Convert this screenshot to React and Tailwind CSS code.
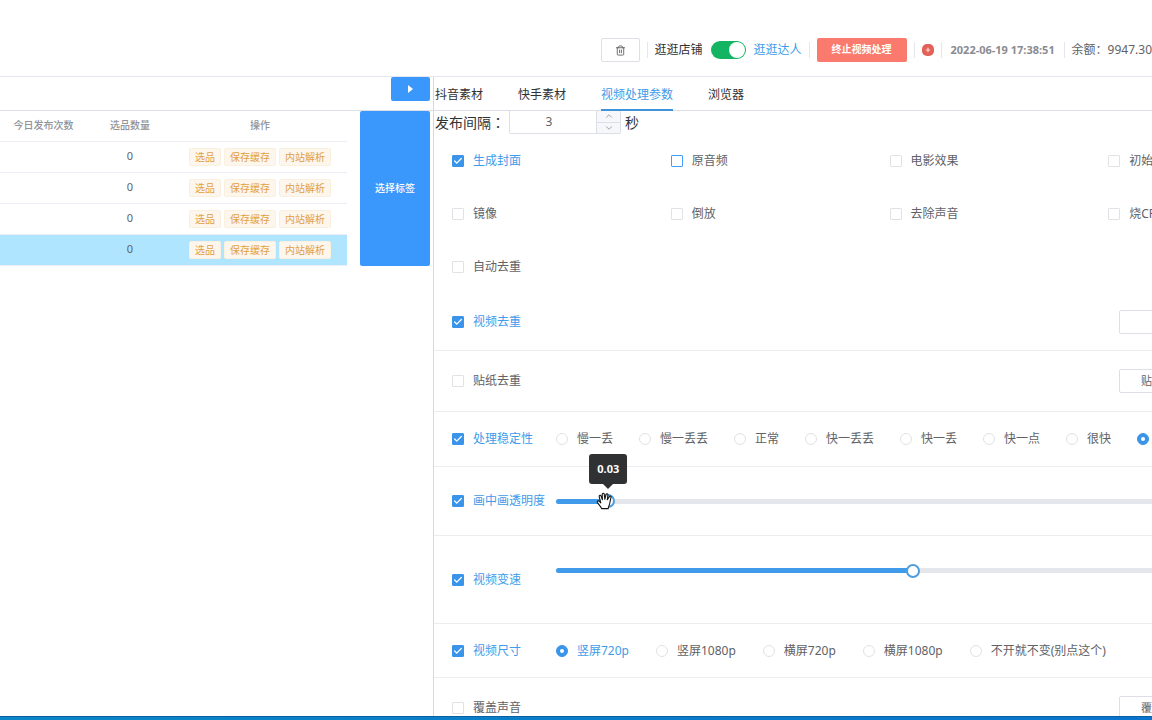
import React, { useState } from "react";
import { Trash2, ChevronUp, ChevronDown, Check } from "lucide-react";

const TABS = ["抖音素材", "快手素材", "视频处理参数", "浏览器"];

const EFFECTS = [
  "生成封面", "原音频", "电影效果", "初始化",
  "镜像", "倒放", "去除声音", "烧CPU",
  "自动去重",
];

const STABILITY = ["慢一丢", "慢一丢丢", "正常", "快一丢丢", "快一丢", "快一点", "很快", "最快"];
const SIZES = ["竖屏720p", "竖屏1080p", "横屏720p", "横屏1080p", "不开就不变(别点这个)"];

function Checkbox({ label, checked, focused, onChange }) {
  return (
    <label className="flex items-center gap-[9px] whitespace-nowrap cursor-pointer">
      <input type="checkbox" className="sr-only" checked={checked} onChange={onChange} />
      <span
        className={`flex size-3 shrink-0 items-center justify-center rounded-[1px] border ${
          checked ? "border-[#3a95ea] bg-[#3a95ea]" : focused ? "border-[#409eff] bg-white" : "border-[#e0e2e6] bg-white"
        }`}
      >
        {checked && <Check size={10} strokeWidth={3} className="text-white" />}
      </span>
      <span className={checked ? "text-[#409bea]" : "text-[#606266]"}>{label}</span>
    </label>
  );
}

function RadioGroup({ name, options, value, onChange, className }) {
  return (
    <div className={`flex items-center ${className}`}>
      {options.map((o) => (
        <label key={o} className="flex items-center gap-[9px] whitespace-nowrap cursor-pointer">
          <input type="radio" name={name} className="sr-only" checked={value === o} onChange={() => onChange(o)} />
          <span
            className={`flex size-3 shrink-0 items-center justify-center rounded-full border ${
              value === o ? "border-[#3a95ea] bg-[#3a95ea]" : "border-[#e0e2e6] bg-white"
            }`}
          >
            {value === o && <span className="size-1 rounded-full bg-white" />}
          </span>
          <span className={value === o ? "text-[#409bea]" : "text-[#606266]"}>{o}</span>
        </label>
      ))}
    </div>
  );
}

function GrabHand() {
  return (
    <svg viewBox="0 0 18 18" className="absolute -left-3 -top-px size-[18px]">
      <path
        d="M5.6 16.6 C4.6 14 2.4 12.2 1.4 10.4 C.8 9.2 2.2 8.4 3.2 9.2 L4.8 10.8 L3.2 4.6 C2.9 3.2 4.6 2.8 5.1 4.1 L6.4 7.8 L6.2 2.4 C6.2 1 8.1 .9 8.3 2.3 L8.8 7.3 L10 2.6 C10.3 1.3 12.1 1.6 11.9 3 L11.3 7.8 L13.3 4.6 C14.1 3.5 15.5 4.3 15 5.6 C14 8.4 14.2 10.4 13.4 12.6 C12.8 14.2 12.3 15 12.2 16.6 Z"
        fill="#fff"
        stroke="#111"
        strokeWidth="1.1"
        strokeLinejoin="round"
      />
    </svg>
  );
}

function Slider({ label, value, max, step, onChange, active }) {
  const pct = `${(value / max) * 100}%`;
  return (
    <div className="relative flex h-4 w-full items-center">
      <div className="h-[5px] w-full rounded-full bg-[#e4e6eb]">
        <div className="h-full rounded-full bg-[#409bea]" style={{ width: pct }} />
      </div>
      <div className="absolute top-0 h-4 w-0" style={{ left: pct }}>
        <div className="absolute -left-[7px] top-px size-[14px] rounded-full border-2 border-[#4d9fe0] bg-white" />
        {active && (
          <>
            <div className="absolute bottom-[25px] left-0 -translate-x-1/2 rounded-[3px] bg-[#303133] px-2 py-[7px] text-[11px] leading-4 font-bold text-white">
              {value}
              <span className="absolute left-1/2 top-full -translate-x-1/2 border-x-[5px] border-t-[5px] border-x-transparent border-t-[#303133]" />
            </div>
            <GrabHand />
          </>
        )}
      </div>
      <input
        type="range"
        aria-label={label}
        className="absolute inset-0 w-full cursor-grab opacity-0"
        min={0}
        max={max}
        step={step}
        value={value}
        onChange={(e) => onChange(Number(e.target.value))}
      />
    </div>
  );
}

function Row({ label, checked, onChange, className, children }) {
  return (
    <div className={`flex items-center border-b border-[#ebedf0] pl-[18px] ${className}`}>
      <div className="w-[104px] shrink-0">
        <Checkbox label={label} checked={checked} onChange={onChange} />
      </div>
      {children}
    </div>
  );
}

function PlainButton({ children }) {
  return (
    <button type="button" className="ml-[563px] h-6 w-[92px] shrink-0 rounded-[2px] border border-[#dcdfe6] bg-white px-[21px] text-left text-[11px] text-[#606266]">
      {children}
    </button>
  );
}

function Divider() {
  return <span className="mx-[7px] h-4 w-px shrink-0 bg-[#e4e7ed]" />;
}

function Header() {
  const [on, setOn] = useState(true);
  return (
    <header className="flex h-[77px] shrink-0 items-center justify-end overflow-hidden border-b border-[#e4e7ed] pt-7 pb-1 whitespace-nowrap">
      <button type="button" aria-label="删除" className="flex h-6 w-[39px] items-center justify-center rounded-[2px] border border-[#dcdfe6] text-[#606266]">
        <Trash2 size={11} />
      </button>
      <Divider />
      <span className="text-[#303133]">逛逛店铺</span>
      <button
        type="button"
        role="switch"
        aria-checked={on}
        aria-label="逛逛达人"
        onClick={() => setOn(!on)}
        className={`mx-2 flex h-[18px] w-[35px] items-center rounded-full px-px ${on ? "justify-end bg-[#13b562]" : "justify-start bg-[#dcdfe6]"}`}
      >
        <span className="size-4 rounded-full bg-white" />
      </button>
      <span className="text-[#409bea]">逛逛达人</span>
      <Divider />
      <button type="button" className="h-6 w-[90px] rounded-[2px] bg-[#fa7a6e] text-[10px] font-bold text-white">
        终止视频处理
      </button>
      <Divider />
      <svg viewBox="0 0 12 12" className="size-3">
        <rect width="12" height="12" rx="5" fill="#e2625a" />
        <path d="M6 3.8v4.4M3.8 6h4.4" stroke="#ffd9d2" strokeWidth="1.2" />
      </svg>
      <Divider />
      <time className="w-[108px] text-center text-[11px] font-bold text-[#8a8c91]">2022-06-19 17:38:51</time>
      <Divider />
      <span className="text-[#606266]">余额：9947.30</span>
    </header>
  );
}

function TaskPanel() {
  return (
    <section className="flex w-[434px] shrink-0 flex-col border-r border-[#d5d8de]">
      <div className="flex h-[34px] shrink-0 items-start justify-end border-b border-[#dcdfe6] pr-[3px]">
        <button type="button" aria-label="展开" className="flex h-6 w-[39px] items-center justify-center rounded-[2px] bg-[#3a98fc]">
          <span className="border-y-[4px] border-l-[5px] border-y-transparent border-l-white" />
        </button>
      </div>
      <div className="flex items-stretch justify-between pr-[3px]">
        <table className="w-[347px] table-fixed border-collapse text-center text-[10px]">
          <thead>
            <tr className="h-[30px] border-b border-[#ebeef5] text-[#909399]">
              <th className="w-[87px] font-medium">今日发布次数</th>
              <th className="w-[86px] font-medium">选品数量</th>
              <th className="font-medium">操作</th>
            </tr>
          </thead>
          <tbody>
            {[0, 1, 2, 3].map((i) => (
              <tr key={i} className={`h-[31px] border-b border-[#ebeef5] ${i === 3 ? "bg-[#afe5fe]" : ""}`}>
                <td></td>
                <td className="text-[11px] text-[#606266]">0</td>
                <td>
                  <div className="flex justify-center gap-[3px]">
                    {["选品", "保存缓存", "内站解析"].map((t) => (
                      <button
                        key={t}
                        type="button"
                        className="h-[18px] rounded-[2px] border border-[#fbf0e0] bg-[#fdf6ec] px-[5px] leading-4 text-[#e2a03f]"
                      >
                        {t}
                      </button>
                    ))}
                  </div>
                </td>
              </tr>
            ))}
          </tbody>
        </table>
        <button type="button" className="w-[70px] rounded-[2px] bg-[#3a98fc] text-[10px] font-medium text-white">
          选择标签
        </button>
      </div>
    </section>
  );
}

export default function App() {
  const [tab, setTab] = useState("视频处理参数");
  const [delay, setDelay] = useState(3);
  const [on, setOn] = useState({
    生成封面: true,
    视频去重: true,
    处理稳定性: true,
    画中画透明度: true,
    视频变速: true,
    视频尺寸: true,
  });
  const [stability, setStability] = useState("最快");
  const [size, setSize] = useState("竖屏720p");
  const [opacity, setOpacity] = useState(0.03);
  const [speed, setSpeed] = useState(1);

  const bind = (label) => ({
    label,
    checked: !!on[label],
    onChange: () => setOn({ ...on, [label]: !on[label] }),
  });

  return (
    <div className="flex h-screen flex-col overflow-hidden bg-white font-['Noto_Sans','Noto_Sans_CJK_SC',sans-serif] text-xs text-[#606266]">
      <Header />

      <main className="flex min-h-0 flex-1">
        <TaskPanel />

        <section className="min-w-0 flex-1 overflow-hidden">
          <nav className="flex h-[34px] gap-[35px] border-b border-[#dcdfe6] pl-px whitespace-nowrap">
            {TABS.map((t) => (
              <button
                key={t}
                type="button"
                onClick={() => setTab(t)}
                className={`h-[34px] border-b-2 pt-1 ${tab === t ? "border-[#3f93d6] text-[#409bea]" : "border-transparent text-[#303133]"}`}
              >
                {t}
              </button>
            ))}
          </nav>

          <div className="w-[893px]">
            <div className="flex h-[23px] items-center pl-px text-sm text-[#303133]">
              <label htmlFor="delay" className="w-[74px] whitespace-nowrap">
                发布间隔<span className="font-['Noto_Sans_CJK_TC',sans-serif]" lang="zh-Hant">：</span>
              </label>
              <div className="flex h-full w-[112px] overflow-hidden rounded-b-[2px] border border-t-0 border-[#dcdfe6]">
                <input
                  id="delay"
                  className="w-full min-w-0 pr-2 text-center text-xs text-[#606266] outline-none"
                  value={delay}
                  onChange={(e) => setDelay(Number(e.target.value) || 0)}
                />
                <div className="flex w-6 shrink-0 flex-col border-l border-[#dcdfe6] bg-[#f5f7fa] text-[#909399]">
                  <button type="button" aria-label="增加" onClick={() => setDelay(delay + 1)} className="flex flex-1 items-center justify-center border-b border-[#dcdfe6]">
                    <ChevronUp size={10} />
                  </button>
                  <button type="button" aria-label="减少" onClick={() => setDelay(delay - 1)} className="flex flex-1 items-center justify-center">
                    <ChevronDown size={10} />
                  </button>
                </div>
              </div>
              <span className="pl-1">秒</span>
            </div>

            <div className="grid auto-rows-[53px] grid-cols-4 items-center pl-[18px]">
              {EFFECTS.map((e) => (
                <Checkbox key={e} {...bind(e)} focused={e === "原音频"} />
              ))}
            </div>

            <Row {...bind("视频去重")} className="h-[58px]">
              <PlainButton />
            </Row>
            <Row {...bind("贴纸去重")} className="h-[61px]">
              <PlainButton>贴纸</PlainButton>
            </Row>
            <Row {...bind("处理稳定性")} className="h-[55px]">
              <RadioGroup name="stability" options={STABILITY} value={stability} onChange={setStability} className="gap-[26px]" />
            </Row>
            <Row {...bind("画中画透明度")} className="h-[69px] pr-[57px]">
              <Slider label="画中画透明度" value={opacity} max={0.41} step={0.01} onChange={setOpacity} active />
            </Row>
            <Row {...bind("视频变速")} className="h-[88px] pr-[57px]">
              <div className="w-full pb-[18px]">
                <Slider label="视频变速" value={speed} max={2} step={0.1} onChange={setSpeed} />
              </div>
            </Row>
            <Row {...bind("视频尺寸")} className="h-[54px]">
              <RadioGroup name="size" options={SIZES} value={size} onChange={setSize} className="gap-[27px]" />
            </Row>
            <Row {...bind("覆盖声音")} className="h-[61px]">
              <PlainButton>覆盖</PlainButton>
            </Row>
          </div>
        </section>
      </main>

      <footer className="h-1 shrink-0 border-t border-[#0a5f9e] bg-linear-to-r from-[#0c86c6] to-[#0a74cc]" />
    </div>
  );
}
